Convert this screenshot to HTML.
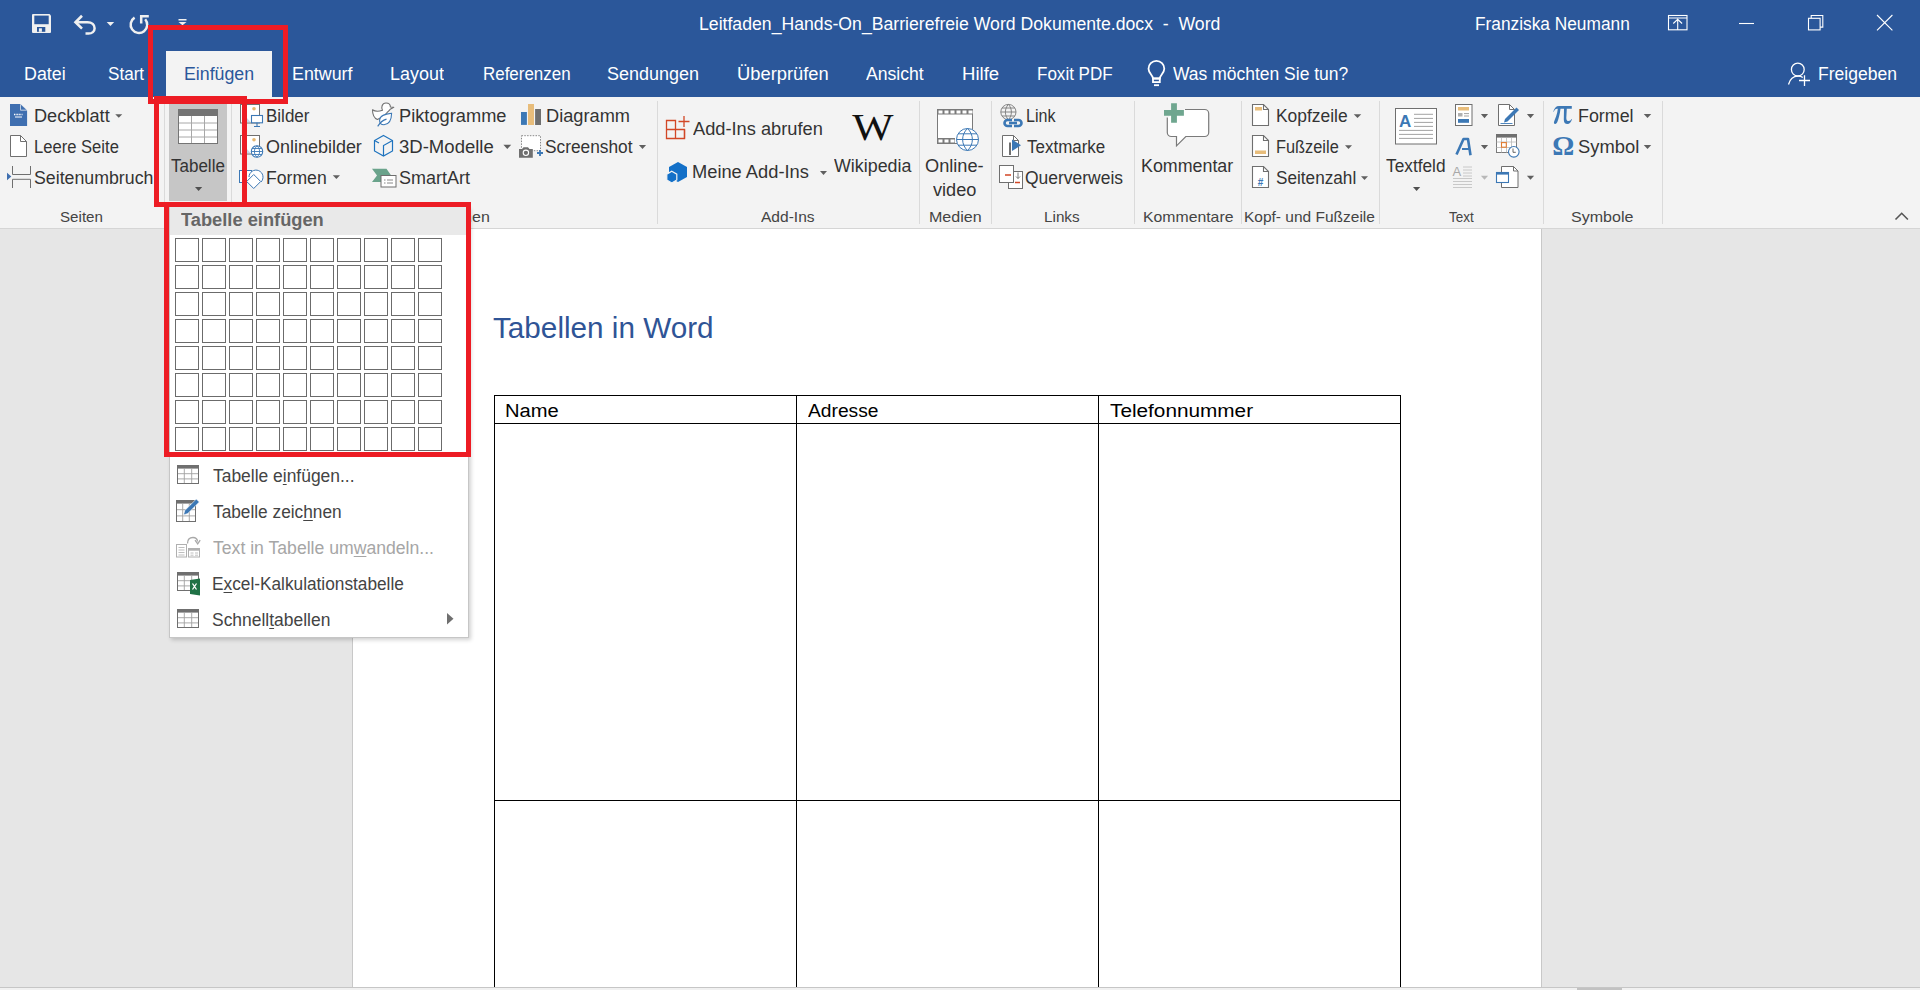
<!DOCTYPE html><html><head><meta charset="utf-8"><style>
html,body{margin:0;padding:0;width:1920px;height:990px;overflow:hidden;background:#e6e6e6;font-family:"Liberation Sans",sans-serif;}
.a{position:absolute;}
.t{position:absolute;white-space:nowrap;transform-origin:0 0;}
u{text-decoration:underline;text-underline-offset:2px;text-decoration-thickness:1px;}
</style></head><body>

<div class="a" style="left:0;top:0;width:1920px;height:97px;background:#2b579a"></div>
<div class="a" style="left:0;top:97px;width:1920px;height:131px;background:#f3f3f3"></div>
<div class="a" style="left:0;top:228px;width:1920px;height:1px;background:#d5d5d5"></div>
<div class="a" style="left:166px;top:51px;width:106px;height:46px;background:#f3f3f3"></div>
<div class="a" style="left:352px;top:229px;width:1px;height:758px;background:#c8c8c8"></div>
<div class="a" style="left:353px;top:229px;width:1188px;height:758px;background:#fff"></div>
<div class="a" style="left:1541px;top:229px;width:1px;height:758px;background:#c8c8c8"></div>
<div class="a" style="left:0;top:987px;width:1920px;height:1px;background:#c6c6c6"></div>
<div class="a" style="left:0;top:988px;width:1920px;height:2px;background:#f1f1f1"></div>
<div class="a" style="left:1577px;top:988px;width:45px;height:2px;background:#c2c2c2"></div>
<div class="a" style="left:494px;top:395px;width:907px;height:1px;background:#000"></div>
<div class="a" style="left:494px;top:423px;width:907px;height:1px;background:#000"></div>
<div class="a" style="left:494px;top:800px;width:907px;height:1px;background:#000"></div>
<div class="a" style="left:494px;top:395px;width:1px;height:592px;background:#000"></div>
<div class="a" style="left:796px;top:395px;width:1px;height:592px;background:#000"></div>
<div class="a" style="left:1098px;top:395px;width:1px;height:592px;background:#000"></div>
<div class="a" style="left:1400px;top:395px;width:1px;height:592px;background:#000"></div>
<div class="a" style="left:164px;top:101px;width:1px;height:123px;background:#dadada"></div>
<div class="a" style="left:231px;top:101px;width:1px;height:123px;background:#dadada"></div>
<div class="a" style="left:657px;top:101px;width:1px;height:123px;background:#dadada"></div>
<div class="a" style="left:919px;top:101px;width:1px;height:123px;background:#dadada"></div>
<div class="a" style="left:991px;top:101px;width:1px;height:123px;background:#dadada"></div>
<div class="a" style="left:1134px;top:101px;width:1px;height:123px;background:#dadada"></div>
<div class="a" style="left:1241px;top:101px;width:1px;height:123px;background:#dadada"></div>
<div class="a" style="left:1379px;top:101px;width:1px;height:123px;background:#dadada"></div>
<div class="a" style="left:1543px;top:101px;width:1px;height:123px;background:#dadada"></div>
<div class="a" style="left:1662px;top:101px;width:1px;height:123px;background:#dadada"></div>
<div class="a" style="left:169px;top:104px;width:58px;height:97px;background:#c6c6c6"></div>
<div class="t" style="left:698.53px;top:14.51px;font-size:18.3px;line-height:18.3px;color:#fff;transform:scaleX(0.9656);">Leitfaden_Hands-On_Barrierefreie Word Dokumente.docx  -  Word</div>
<div class="t" style="left:1474.55px;top:14.51px;font-size:18.3px;line-height:18.3px;color:#fff;transform:scaleX(0.9460);">Franziska Neumann</div>
<div class="t" style="left:23.52px;top:64.51px;font-size:18.3px;line-height:18.3px;color:#fff;transform:scaleX(0.9756);">Datei</div>
<div class="t" style="left:108.07px;top:64.51px;font-size:18.3px;line-height:18.3px;color:#fff;transform:scaleX(0.9342);">Start</div>
<div class="t" style="left:291.52px;top:64.51px;font-size:18.3px;line-height:18.3px;color:#fff;transform:scaleX(0.9754);">Entwurf</div>
<div class="t" style="left:390.02px;top:64.51px;font-size:18.3px;line-height:18.3px;color:#fff;transform:scaleX(0.9815);">Layout</div>
<div class="t" style="left:482.57px;top:64.51px;font-size:18.3px;line-height:18.3px;color:#fff;transform:scaleX(0.9266);">Referenzen</div>
<div class="t" style="left:607.02px;top:64.51px;font-size:18.3px;line-height:18.3px;color:#fff;transform:scaleX(0.9835);">Sendungen</div>
<div class="t" style="left:736.50px;top:64.51px;font-size:18.3px;line-height:18.3px;color:#fff;transform:scaleX(1.0028);">Überprüfen</div>
<div class="t" style="left:866.00px;top:64.51px;font-size:18.3px;line-height:18.3px;color:#fff;transform:scaleX(0.9625);">Ansicht</div>
<div class="t" style="left:962.49px;top:64.51px;font-size:18.3px;line-height:18.3px;color:#fff;transform:scaleX(1.0143);">Hilfe</div>
<div class="t" style="left:1037.07px;top:64.51px;font-size:18.3px;line-height:18.3px;color:#fff;transform:scaleX(0.9313);">Foxit PDF</div>
<div class="t" style="left:1172.50px;top:64.51px;font-size:18.3px;line-height:18.3px;color:#fff;transform:scaleX(0.9563);">Was möchten Sie tun?</div>
<div class="t" style="left:1817.79px;top:64.51px;font-size:18.3px;line-height:18.3px;color:#fff;transform:scaleX(0.9594);">Freigeben</div>
<div class="t" style="left:183.53px;top:64.51px;font-size:18.3px;line-height:18.3px;color:#2b579a;transform:scaleX(0.9714);">Einfügen</div>
<div class="t" style="left:33.51px;top:106.51px;font-size:18.3px;line-height:18.3px;color:#333333;transform:scaleX(0.9933);">Deckblatt</div>
<div class="t" style="left:33.59px;top:137.51px;font-size:18.3px;line-height:18.3px;color:#333333;transform:scaleX(0.9076);">Leere Seite</div>
<div class="t" style="left:33.53px;top:168.51px;font-size:18.3px;line-height:18.3px;color:#333333;transform:scaleX(0.9711);">Seitenumbruch</div>
<div class="t" style="left:171.00px;top:156.51px;font-size:18.3px;line-height:18.3px;color:#333333;transform:scaleX(0.9298);">Tabelle</div>
<div class="t" style="left:266.27px;top:106.51px;font-size:18.3px;line-height:18.3px;color:#333333;transform:scaleX(0.9304);">Bilder</div>
<div class="t" style="left:265.72px;top:137.51px;font-size:18.3px;line-height:18.3px;color:#333333;transform:scaleX(0.9825);">Onlinebilder</div>
<div class="t" style="left:266.24px;top:168.51px;font-size:18.3px;line-height:18.3px;color:#333333;transform:scaleX(0.9639);">Formen</div>
<div class="t" style="left:399.00px;top:106.51px;font-size:18.3px;line-height:18.3px;color:#333333;transform:scaleX(0.9981);">Piktogramme</div>
<div class="t" style="left:398.99px;top:137.51px;font-size:18.3px;line-height:18.3px;color:#333333;transform:scaleX(1.0141);">3D-Modelle</div>
<div class="t" style="left:399.02px;top:168.51px;font-size:18.3px;line-height:18.3px;color:#333333;transform:scaleX(0.9831);">SmartArt</div>
<div class="t" style="left:546.00px;top:106.51px;font-size:18.3px;line-height:18.3px;color:#333333;transform:scaleX(0.9970);">Diagramm</div>
<div class="t" style="left:545.05px;top:137.51px;font-size:18.3px;line-height:18.3px;color:#333333;transform:scaleX(0.9457);">Screenshot</div>
<div class="t" style="left:692.50px;top:119.51px;font-size:18.3px;line-height:18.3px;color:#333333;transform:scaleX(0.9981);">Add-Ins abrufen</div>
<div class="t" style="left:692.00px;top:163.26px;font-size:18.3px;line-height:18.3px;color:#333333;transform:scaleX(1.0000);">Meine Add-Ins</div>
<div class="t" style="left:834.25px;top:156.51px;font-size:18.3px;line-height:18.3px;color:#333333;transform:scaleX(0.9766);">Wikipedia</div>
<div class="t" style="left:925.41px;top:156.51px;font-size:18.3px;line-height:18.3px;color:#333333;transform:scaleX(0.9947);">Online-</div>
<div class="t" style="left:933.40px;top:180.51px;font-size:18.3px;line-height:18.3px;color:#333333;transform:scaleX(0.9930);">video</div>
<div class="t" style="left:1026.12px;top:106.51px;font-size:18.3px;line-height:18.3px;color:#333333;transform:scaleX(0.8788);">Link</div>
<div class="t" style="left:1027.00px;top:137.51px;font-size:18.3px;line-height:18.3px;color:#333333;transform:scaleX(0.9286);">Textmarke</div>
<div class="t" style="left:1025.04px;top:168.51px;font-size:18.3px;line-height:18.3px;color:#333333;transform:scaleX(0.9554);">Querverweis</div>
<div class="t" style="left:1141.02px;top:156.51px;font-size:18.3px;line-height:18.3px;color:#333333;transform:scaleX(0.9761);">Kommentar</div>
<div class="t" style="left:1276.05px;top:106.51px;font-size:18.3px;line-height:18.3px;color:#333333;transform:scaleX(0.9527);">Kopfzeile</div>
<div class="t" style="left:1276.11px;top:137.51px;font-size:18.3px;line-height:18.3px;color:#333333;transform:scaleX(0.8949);">Fußzeile</div>
<div class="t" style="left:1276.06px;top:168.51px;font-size:18.3px;line-height:18.3px;color:#333333;transform:scaleX(0.9398);">Seitenzahl</div>
<div class="t" style="left:1386.20px;top:156.51px;font-size:18.3px;line-height:18.3px;color:#333333;transform:scaleX(0.9452);">Textfeld</div>
<div class="t" style="left:1577.77px;top:106.51px;font-size:18.3px;line-height:18.3px;color:#333333;transform:scaleX(0.9773);">Formel</div>
<div class="t" style="left:1577.75px;top:137.51px;font-size:18.3px;line-height:18.3px;color:#333333;transform:scaleX(1.0042);">Symbol</div>
<div class="t" style="left:59.96px;top:209.64px;font-size:14.6px;line-height:14.6px;color:#444444;transform:scaleX(1.0375);">Seiten</div>
<div class="t" style="left:399.40px;top:209.64px;font-size:14.6px;line-height:14.6px;color:#444444;transform:scaleX(1.0975);">Illustrationen</div>
<div class="t" style="left:761.00px;top:209.64px;font-size:14.6px;line-height:14.6px;color:#444444;transform:scaleX(1.0650);">Add-Ins</div>
<div class="t" style="left:928.60px;top:209.64px;font-size:14.6px;line-height:14.6px;color:#444444;transform:scaleX(1.1000);">Medien</div>
<div class="t" style="left:1044.45px;top:209.64px;font-size:14.6px;line-height:14.6px;color:#444444;transform:scaleX(1.0455);">Links</div>
<div class="t" style="left:1142.67px;top:209.64px;font-size:14.6px;line-height:14.6px;color:#444444;transform:scaleX(1.0823);">Kommentare</div>
<div class="t" style="left:1244.44px;top:209.64px;font-size:14.6px;line-height:14.6px;color:#444444;transform:scaleX(1.0615);">Kopf- und Fußzeile</div>
<div class="t" style="left:1448.75px;top:209.64px;font-size:14.6px;line-height:14.6px;color:#444444;transform:scaleX(0.9259);">Text</div>
<div class="t" style="left:1571.40px;top:209.64px;font-size:14.6px;line-height:14.6px;color:#444444;transform:scaleX(1.1000);">Symbole</div>
<div class="t" style="left:493.18px;top:313.55px;font-size:29px;line-height:29px;color:#2f5496;transform:scaleX(1.0239);">Tabellen in Word</div>
<div class="t" style="left:504.88px;top:401.76px;font-size:18px;line-height:18px;color:#000;transform:scaleX(1.1196);">Name</div>
<div class="t" style="left:807.80px;top:401.76px;font-size:18px;line-height:18px;color:#000;transform:scaleX(1.0677);">Adresse</div>
<div class="t" style="left:1109.70px;top:401.76px;font-size:18px;line-height:18px;color:#000;transform:scaleX(1.1532);">Telefonnummer</div>
<svg class="a" style="left:0;top:0" width="1920" height="990" viewBox="0 0 1920 990"><path d="M32 15a1 1 0 0 1 1-1h16.5l1.5 1.5V32a1 1 0 0 1-1 1H33a1 1 0 0 1-1-1z" fill="#f0f0f0"/><rect x="34.3" y="15.6" width="14.4" height="8.6" fill="#2b579a"/><rect x="37" y="27" width="8.3" height="4.8" fill="#2b579a"/><rect x="38.9" y="28.3" width="3" height="3.5" fill="#f0f0f0"/><path d="M76 22.2H87.5C92 22.2 94.6 25 94.6 28.2C94.6 31.5 92 33.6 88.5 33.6H85.5" fill="none" stroke="#f0f0f0" stroke-width="2.5"/><path d="M82 15.8L75.5 22.2L82 28.6" fill="none" stroke="#f0f0f0" stroke-width="2.6"/><path d="M106.7 22h7.5l-3.75 4z" fill="#f0f0f0"/><path d="M134.6 17.6A8.3 8.3 0 1 0 145.2 19.2" fill="none" stroke="#f0f0f0" stroke-width="2.5"/><path d="M141.2 23.5V16.3H148.8" fill="none" stroke="#f0f0f0" stroke-width="2.5"/><rect x="178.5" y="19" width="8" height="1.5" fill="#f0f0f0"/><path d="M178.5 22h8l-4 3.3z" fill="#f0f0f0"/><g fill="none" stroke="#fff" stroke-width="1.1"><rect x="1668.5" y="15.5" width="18.5" height="14.3"/><path d="M1668.5 18h18.5M1677.7 30V19.5M1673.3 23.5l4.4-4.2 4.4 4.2"/><path d="M1739 23.5h15"/><rect x="1808.5" y="18.3" width="11.6" height="11.6"/><path d="M1811.2 18.3v-2.8h11.6v11.6h-2.7"/><path d="M1877 15l15.4 15.4M1892.4 15l-15.4 15.4"/></g><g fill="none" stroke="#fff" stroke-width="1.8"><path d="M1153 78.5c0-3-4.5-5.5-4.5-9.8a7.9 7.9 0 0 1 15.8 0c0 4.3-4.5 6.8-4.5 9.8z"/><rect x="1153" y="78.5" width="6.8" height="3.6"/></g><rect x="1154" y="84.3" width="5" height="1.8" fill="#fff"/><g fill="none" stroke="#fff" stroke-width="1.3"><circle cx="1797.8" cy="69.6" r="6.4"/><path d="M1788.5 84.5c1.5-5.5 5.5-8.3 9.5-8.3 2 0 3.5.4 4.8 1.3"/><path d="M1799 80.5h11M1804.5 75.2v10.8"/></g><path d="M10 104h10.3l6.8 6.5V126H10z" fill="#3f6fb0"/><path d="M20.3 104v6.5h6.8z" fill="#f3f3f3"/><path d="M21 104.8v5h5.3z" fill="#3f6fb0"/><path d="M14 114.5h8.5" stroke="#fff" stroke-width="1.3" stroke-dasharray="1 .6"/><path d="M15 117h7" stroke="#fff" stroke-width="1"/><path d="M10.5 135.5h10l6 6V156.5h-16z" fill="#fff" stroke="#6f6f6f" stroke-width="1"/><path d="M20.5 135.5v6h6" fill="none" stroke="#6f6f6f" stroke-width="1"/><g fill="none" stroke="#6f6f6f" stroke-width="1"><path d="M12.5 166v8.5h18V166M12.5 188v-8.7h18V188"/></g><path d="M7 172.7l4.3 3.8-4.3 3.8z" fill="#3f6fb0"/><path d="M115.25 114.2h7l-3.5 3.6z" fill="#5f5f5f"/><rect x="178.5" y="109.5" width="39" height="34" fill="#fff" stroke="#747474" stroke-width="1"/><rect x="178.5" y="109.5" width="39" height="6.5" fill="#747474"/><g stroke="#a8a8a8" stroke-width="1"><path d="M191.5 116v27M204.5 116v27M179 123h38M179 130h38M179 137h38"/></g><rect x="178.5" y="109.5" width="39" height="34" fill="none" stroke="#747474" stroke-width="1"/><path d="M195.0 187.1h7.2l-3.6 3.9z" fill="#505050"/><rect x="240.5" y="104.5" width="19" height="18.5" fill="#fff" stroke="#6f6f6f"/><circle cx="254" cy="108.8" r="1.8" fill="#e6b770"/><path d="M242 112.5l8.5 9.5h-8.5z" fill="#c5d9ee"/><rect x="251.5" y="115.5" width="11" height="7.3" fill="#fff" stroke="#3c78b5" stroke-width="1.1"/><path d="M257 122.8v3.2M254 126.5h6" stroke="#3c78b5" stroke-width="1.1"/><rect x="240.5" y="135.5" width="19" height="18.5" fill="#fff" stroke="#6f6f6f"/><circle cx="254" cy="139.8" r="1.8" fill="#e6b770"/><path d="M242 143.5l8.5 9.5h-8.5z" fill="#c5d9ee"/><circle cx="257" cy="151.5" r="5.7" fill="#fff" stroke="#3c78b5" stroke-width="1.1"/><path d="M251.3 151.5h11.4M252.3 148.5h9.4M252.3 154.5h9.4M257 145.8c-3.5 3.5-3.5 8 0 11.4M257 145.8c3.5 3.5 3.5 8 0 11.4" fill="none" stroke="#3c78b5" stroke-width="0.9"/><g fill="#fff" stroke="#3c78b5" stroke-width="1"><rect x="239.5" y="170.5" width="12" height="12"/><path d="M249 177a7 7 0 1 1 12 5" /><path d="M253.7 174.5l7 7-7 7-7-7z"/></g><path d="M332.79999999999995 175.3h7.2l-3.6 3.8z" fill="#5f5f5f"/><path d="M372.5 109.7C375 111.5 379 111.5 382.5 110.2C381 108 381.8 103 386 103C389.3 103 390.4 105.3 390.4 107L393.8 107.3L390.2 109.3C389.5 110.8 387.8 111.5 386.8 112.8L384 116L377.4 119.4C374 118 372.5 115 372.5 109.7Z" fill="#fff" stroke="#707070" stroke-width="1.1" stroke-linejoin="round"/><path d="M391.6 113.3C386 114 380 115 379.6 120C379.4 123 381 124.8 384 124.8C389.5 124.5 391.5 119 391.6 113.3Z" fill="#fff" stroke="#3c78b5" stroke-width="1.1"/><path d="M377.7 126.4C380 122.5 383 120 386.5 119.1" fill="none" stroke="#3c78b5" stroke-width="1.1"/><g fill="none" stroke="#1e73be" stroke-width="1.2"><path d="M383.5 135.5l9 5v10.5l-9 5-9-5V140.5z"/><path d="M374.5 140.5l4.5 2.5M392.5 140.5l-9 5v10.5"/></g><path d="M503.40000000000003 144.7h7.8l-3.9 4.2z" fill="#5f5f5f"/><path d="M372 168.8H386.5L391 175.3L386.5 182H372L377 175.4Z" fill="#6aa38b"/><rect x="381" y="175.5" width="15" height="11.5" fill="#fff" stroke="#6f6f6f"/><path d="M384 180h1.5M387 180h6M384 183h1.5M387 183h6" stroke="#7a7a7a" stroke-width="0.9"/><rect x="521" y="112" width="5.9" height="12.9" fill="#3c78b5"/><rect x="528" y="104" width="6" height="21" fill="#e8bd7b"/><rect x="535.1" y="109" width="5.9" height="16" fill="#6f6f6f"/><rect x="521.5" y="135.7" width="19" height="15" fill="#fff" stroke="#888" stroke-width="1" stroke-dasharray="1.5 1.3"/><path d="M519 149h3l1.5-1.8h4.5l1.5 1.8h3.3v8.7H519z" fill="#6f6f6f"/><circle cx="525.9" cy="152.8" r="2.7" fill="none" stroke="#fff" stroke-width="1.1"/><path d="M537 153h6M540 150v6" stroke="#3c78b5" stroke-width="1.8"/><path d="M638.9 145.1h7.2l-3.6 3.8z" fill="#5f5f5f"/><g fill="none" stroke="#d24726" stroke-width="1.3"><path d="M666.5 120.5h9v18h-9zM666.5 129.5h18v9h-9"/><path d="M684.5 129.5v9M678.5 121.5h11M684 116v11"/></g><path d="M678 162l9 5v10l-9 5-9-5v-10z" fill="#1370c8"/><path d="M671.8 171.3l5 2.9v5.8l-5 2.9-5-2.9v-5.8z" fill="#1370c8" stroke="#f3f3f3" stroke-width="1.2"/><path d="M820.0 171h7l-3.5 4z" fill="#5f5f5f"/><text x="873" y="140" font-family="Liberation Serif" font-size="38" text-anchor="middle" fill="#111" transform="translate(873 0) scale(1.15 1) translate(-873 0)">W</text><rect x="937.5" y="109.5" width="35" height="34" fill="#fff" stroke="#7a7a7a" stroke-width="1"/><g fill="#7a7a7a"><rect x="937" y="109" width="36" height="5.5"/><rect x="937" y="138" width="18" height="5.5"/></g><g fill="#fff"><rect x="938.5" y="110.5" width="4" height="3"/><rect x="944.5" y="110.5" width="4" height="3"/><rect x="950.5" y="110.5" width="4" height="3"/><rect x="956.5" y="110.5" width="4" height="3"/><rect x="962.5" y="110.5" width="4" height="3"/><rect x="968.5" y="110.5" width="4" height="3"/><rect x="938.5" y="139.5" width="4" height="3"/><rect x="944.5" y="139.5" width="4" height="3"/><rect x="950.5" y="139.5" width="4" height="3"/></g><circle cx="967.5" cy="139.5" r="11" fill="#fff" stroke="#3c78b5" stroke-width="1"/><path d="M956.5 139.5h22M958 133.8h19M958 145.2h19M967.5 128.5c-6.5 6-6.5 16 0 22M967.5 128.5c6.5 6 6.5 16 0 22" fill="none" stroke="#3c78b5" stroke-width="1"/><g fill="none" stroke="#7a7a7a" stroke-width="0.9"><circle cx="1008.4" cy="112" r="7.6"/><path d="M1000.8 112h15.2M1002 108h12.8M1002 116h12.8M1008.4 104.4c-4 4-4 11.5 0 15.2M1008.4 104.4c4 4 4 11.5 0 15.2"/></g><g fill="none" stroke="#3c78b5" stroke-width="2.6"><path d="M1012 120h-4.5a3 3 0 0 0 0 6h4.5M1014 120h4.5a3 3 0 0 1 0 6H1014M1009 123h8"/></g><path d="M1002.5 135.5h11l5 5v16h-16z" fill="#fff" stroke="#6f6f6f"/><path d="M1013.5 135.5v5h5" fill="none" stroke="#6f6f6f"/><rect x="1009" y="142.5" width="2" height="12.5" fill="#6f6f6f"/><path d="M1012 139.5l9 5.8-9 5.8z" fill="#3c78b5"/><rect x="1008.5" y="171.5" width="14" height="17" fill="#fff" stroke="#6f6f6f"/><rect x="999.5" y="165.5" width="14" height="17" fill="#fff" stroke="#6f6f6f"/><path d="M1005 175h6M1015 182.5h5" stroke="#d24726" stroke-width="1.6"/><path d="M1018 172.5v6M1016 176.5l2 2 2-2" fill="none" stroke="#6f6f6f" stroke-width="0.9"/><path d="M1185 109.5H1204.7A4 4 0 0 1 1208.7 113.5V132.5A4 4 0 0 1 1204.7 136.5H1185.8L1176.5 145.8V136.5H1171.3A4 4 0 0 1 1167.3 132.5V117.5" fill="#fff" stroke="#7a7a7a" stroke-width="1.2"/><path d="M1171.1 103.2h5.8v6.9h7v5.6h-7v7.1h-5.8v-7.1h-7.1v-5.6h7.1z" fill="#6fa68f"/><path d="M1252.5 104.5h11l5 5v16h-16z" fill="#fff" stroke="#6f6f6f" stroke-width="1.1"/><path d="M1263.5 104.5v5h5" fill="none" stroke="#6f6f6f" stroke-width="1.1"/><rect x="1255" y="107" width="7" height="3.5" fill="#e8bd7b"/><path d="M1252.5 135.5h11l5 5v16h-16z" fill="#fff" stroke="#6f6f6f" stroke-width="1.1"/><path d="M1263.5 135.5v5h5" fill="none" stroke="#6f6f6f" stroke-width="1.1"/><rect x="1255" y="150.5" width="11" height="3.5" fill="#e8bd7b"/><path d="M1252.5 166.5h11l5 5v16h-16z" fill="#fff" stroke="#6f6f6f" stroke-width="1.1"/><path d="M1263.5 166.5v5h5" fill="none" stroke="#6f6f6f" stroke-width="1.1"/><text x="1260.5" y="186" font-family="Liberation Sans" font-size="10" font-weight="bold" text-anchor="middle" fill="#3c78b5">#</text><path d="M1353.75 114.2h7.5l-3.75 3.8z" fill="#5f5f5f"/><path d="M1345.0 145.2h7l-3.5 3.8z" fill="#5f5f5f"/><path d="M1361.0 176.2h7l-3.5 3.8z" fill="#5f5f5f"/><rect x="1395.5" y="108.5" width="41" height="35.5" fill="#fff" stroke="#6f6f6f" stroke-width="1"/><text x="1399" y="127" font-family="Liberation Sans" font-size="17" font-weight="bold" fill="#3c78b5">A</text><path d="M1414 114.3h19M1414 118.4h19M1414 122.4h19M1414 126.4h19M1399 130.4h34M1399 134.4h34M1399 138.4h34" stroke="#8a8a8a" stroke-width="0.8"/><path d="M1413.0 187h7.2l-3.6 3.9z" fill="#505050"/><rect x="1455.5" y="104.5" width="16.5" height="21" fill="#fff" stroke="#6f6f6f"/><rect x="1458" y="107" width="11" height="3.5" fill="#e8bd7b"/><rect x="1458" y="113" width="4.5" height="3.5" fill="#b0b0b0"/><path d="M1464 113.6h5M1464 116h5" stroke="#8a8a8a" stroke-width="0.8"/><rect x="1458" y="119" width="11" height="3.8" fill="#3c78b5"/><path d="M1480.9 114h7.2l-3.6 4.2z" fill="#5f5f5f"/><path d="M1498.5 104.5h11l5 5v16h-16z" fill="#fff" stroke="#6f6f6f"/><path d="M1509.5 104.5v5h5" fill="none" stroke="#6f6f6f"/><path d="M1504 122.5l1-3.5 11.5-11.5 2.5 2.5-11.5 11.5z" fill="#3c78b5"/><path d="M1500.5 123.5h12" stroke="#3c78b5" stroke-width="0.9"/><path d="M1526.9 114h7.2l-3.6 4.2z" fill="#5f5f5f"/><path d="M1456.5 154.5l7-15.5h4.5l2.5 16.3" fill="none" stroke="#3c78b5" stroke-width="2.6" stroke-linejoin="round"/><path d="M1462 149h7" stroke="#3c78b5" stroke-width="2"/><path d="M1480.9 145h7.2l-3.6 4.2z" fill="#5f5f5f"/><rect x="1496.5" y="134.5" width="20" height="18" fill="#fff" stroke="#7a7a7a"/><rect x="1496" y="134" width="21" height="3.6" fill="#6f6f6f"/><path d="M1501.5 138v14.5M1506.5 138v14.5M1511.5 138v14.5M1496.5 142h20M1496.5 147.5h20" stroke="#b8b8b8" stroke-width="0.8"/><rect x="1501.5" y="142.6" width="4.8" height="4.6" fill="#fff" stroke="#e07b2f" stroke-width="1.1"/><circle cx="1513.8" cy="151.8" r="5.3" fill="#fff" stroke="#3c78b5" stroke-width="1.1"/><path d="M1513 148.5v3.8h2.8" fill="none" stroke="#555" stroke-width="0.9"/><text x="1452.5" y="175.6" font-family="Liberation Sans" font-size="13" fill="#a8a8a8">A</text><path d="M1463 167h9M1463 170h9M1463 173h9M1463 176h9M1453 178.5h19M1453 181.5h19M1453 184.5h19M1453 187.5h19" stroke="#bdbdbd" stroke-width="0.8"/><path d="M1480.9 175.8h7.2l-3.6 4z" fill="#b8b8b8"/><path d="M1501.5 166.5h12l4.5 4.5v16.5h-16.5z" fill="#fff" stroke="#6f6f6f"/><path d="M1513.5 166.5v4.5h4.5" fill="none" stroke="#6f6f6f"/><rect x="1496.5" y="172.5" width="12" height="10" fill="#fff" stroke="#3c78b5" stroke-width="1.1"/><rect x="1496" y="172" width="13" height="2.6" fill="#3c78b5"/><path d="M1526.9 175.8h7.2l-3.6 4z" fill="#5f5f5f"/><path d="M1553.3 111.5C1554.5 108 1556 106 1559 106L1571.8 106L1571.8 108.8L1566.8 108.8L1566.3 118C1566.3 120.5 1567.5 121 1568.5 121C1570 121 1571 120 1571.5 119L1572 119.3C1571 122.5 1569.5 124 1567.5 124C1565 124 1563.8 122.5 1563.8 119.5L1564 108.8L1560.5 108.8C1560 114 1558.5 119 1557.5 121.5C1557 123 1556.2 124 1555.2 124C1554 124 1553.8 123 1554 122C1555 119 1557.5 114 1557.8 108.8L1557 108.8C1555.5 108.8 1554.5 110 1553.8 111.7Z" fill="#3c78b5"/><text x="1552.3" y="155" font-family="Liberation Serif" font-size="27.5" font-weight="bold" fill="#3c78b5">Ω</text><path d="M1643.75 114h7.5l-3.75 4z" fill="#5f5f5f"/><path d="M1643.75 145h7.5l-3.75 4z" fill="#5f5f5f"/><path d="M1895.5 219.5l6.2-6.2 6.2 6.2" fill="none" stroke="#555" stroke-width="1.6"/></svg>
<div class="a" style="left:169px;top:207px;width:300px;height:431px;background:#fff;border:1px solid #c6c6c6;box-sizing:border-box;box-shadow:2px 2px 4px rgba(0,0,0,0.18)"></div>
<div class="a" style="left:170px;top:207px;width:298px;height:28px;background:#e9e9e9"></div>
<div class="t" style="left:180.50px;top:210.51px;font-size:18.3px;line-height:18.3px;color:#666666;font-weight:bold;transform:scaleX(0.9993);">Tabelle einfügen</div>
<svg class="a" style="left:0;top:0" width="1920" height="990" viewBox="0 0 1920 990"><g fill="#fff" stroke="#6b6b6b" stroke-width="1"><rect x="175.5" y="238.5" width="23" height="23"/><rect x="202.5" y="238.5" width="23" height="23"/><rect x="229.5" y="238.5" width="23" height="23"/><rect x="256.5" y="238.5" width="23" height="23"/><rect x="283.5" y="238.5" width="23" height="23"/><rect x="310.5" y="238.5" width="23" height="23"/><rect x="337.5" y="238.5" width="23" height="23"/><rect x="364.5" y="238.5" width="23" height="23"/><rect x="391.5" y="238.5" width="23" height="23"/><rect x="418.5" y="238.5" width="23" height="23"/><rect x="175.5" y="265.5" width="23" height="23"/><rect x="202.5" y="265.5" width="23" height="23"/><rect x="229.5" y="265.5" width="23" height="23"/><rect x="256.5" y="265.5" width="23" height="23"/><rect x="283.5" y="265.5" width="23" height="23"/><rect x="310.5" y="265.5" width="23" height="23"/><rect x="337.5" y="265.5" width="23" height="23"/><rect x="364.5" y="265.5" width="23" height="23"/><rect x="391.5" y="265.5" width="23" height="23"/><rect x="418.5" y="265.5" width="23" height="23"/><rect x="175.5" y="292.5" width="23" height="23"/><rect x="202.5" y="292.5" width="23" height="23"/><rect x="229.5" y="292.5" width="23" height="23"/><rect x="256.5" y="292.5" width="23" height="23"/><rect x="283.5" y="292.5" width="23" height="23"/><rect x="310.5" y="292.5" width="23" height="23"/><rect x="337.5" y="292.5" width="23" height="23"/><rect x="364.5" y="292.5" width="23" height="23"/><rect x="391.5" y="292.5" width="23" height="23"/><rect x="418.5" y="292.5" width="23" height="23"/><rect x="175.5" y="319.5" width="23" height="23"/><rect x="202.5" y="319.5" width="23" height="23"/><rect x="229.5" y="319.5" width="23" height="23"/><rect x="256.5" y="319.5" width="23" height="23"/><rect x="283.5" y="319.5" width="23" height="23"/><rect x="310.5" y="319.5" width="23" height="23"/><rect x="337.5" y="319.5" width="23" height="23"/><rect x="364.5" y="319.5" width="23" height="23"/><rect x="391.5" y="319.5" width="23" height="23"/><rect x="418.5" y="319.5" width="23" height="23"/><rect x="175.5" y="346.5" width="23" height="23"/><rect x="202.5" y="346.5" width="23" height="23"/><rect x="229.5" y="346.5" width="23" height="23"/><rect x="256.5" y="346.5" width="23" height="23"/><rect x="283.5" y="346.5" width="23" height="23"/><rect x="310.5" y="346.5" width="23" height="23"/><rect x="337.5" y="346.5" width="23" height="23"/><rect x="364.5" y="346.5" width="23" height="23"/><rect x="391.5" y="346.5" width="23" height="23"/><rect x="418.5" y="346.5" width="23" height="23"/><rect x="175.5" y="373.5" width="23" height="23"/><rect x="202.5" y="373.5" width="23" height="23"/><rect x="229.5" y="373.5" width="23" height="23"/><rect x="256.5" y="373.5" width="23" height="23"/><rect x="283.5" y="373.5" width="23" height="23"/><rect x="310.5" y="373.5" width="23" height="23"/><rect x="337.5" y="373.5" width="23" height="23"/><rect x="364.5" y="373.5" width="23" height="23"/><rect x="391.5" y="373.5" width="23" height="23"/><rect x="418.5" y="373.5" width="23" height="23"/><rect x="175.5" y="400.5" width="23" height="23"/><rect x="202.5" y="400.5" width="23" height="23"/><rect x="229.5" y="400.5" width="23" height="23"/><rect x="256.5" y="400.5" width="23" height="23"/><rect x="283.5" y="400.5" width="23" height="23"/><rect x="310.5" y="400.5" width="23" height="23"/><rect x="337.5" y="400.5" width="23" height="23"/><rect x="364.5" y="400.5" width="23" height="23"/><rect x="391.5" y="400.5" width="23" height="23"/><rect x="418.5" y="400.5" width="23" height="23"/><rect x="175.5" y="427.5" width="23" height="23"/><rect x="202.5" y="427.5" width="23" height="23"/><rect x="229.5" y="427.5" width="23" height="23"/><rect x="256.5" y="427.5" width="23" height="23"/><rect x="283.5" y="427.5" width="23" height="23"/><rect x="310.5" y="427.5" width="23" height="23"/><rect x="337.5" y="427.5" width="23" height="23"/><rect x="364.5" y="427.5" width="23" height="23"/><rect x="391.5" y="427.5" width="23" height="23"/><rect x="418.5" y="427.5" width="23" height="23"/></g><rect x="177.5" y="465.5" width="21" height="18" fill="#fff" stroke="#6f6f6f"/><rect x="177" y="465" width="22" height="3.6" fill="#6f6f6f"/><path d="M184.3 468.6V484M191.7 468.6V484M177 473.7H199M177 478.9H199" stroke="#a0a0a0" stroke-width="0.9"/><rect x="177.5" y="465.5" width="21" height="18" fill="none" stroke="#6f6f6f"/><rect x="176.5" y="500.5" width="19" height="21" fill="#fff" stroke="#6f6f6f"/><rect x="176" y="500" width="20" height="3.6" fill="#6f6f6f"/><path d="M182.7 503.6V522M189.3 503.6V522M176 509.7H196M176 515.9H196" stroke="#a0a0a0" stroke-width="0.9"/><rect x="176.5" y="500.5" width="19" height="21" fill="none" stroke="#6f6f6f"/><path d="M183.5 515l1.3-4.5 11.5-11.5 3 3-11.5 11.5z" fill="#3c78b5" stroke="#fff" stroke-width="0.6"/><g fill="#fff" stroke="#b0b0b0" stroke-width="1"><rect x="176.5" y="544.5" width="10" height="12.5"/><rect x="188.5" y="548.5" width="11" height="8.5"/></g><rect x="188.5" y="548.5" width="11" height="2.2" fill="#b0b0b0"/><path d="M178.5 547.5h6M178.5 550h6M178.5 552.5h6M178.5 555h6M190.5 553h3M195 553h3M190.5 555.2h3M195 555.2h3" fill="none" stroke="#b8b8b8" stroke-width="0.9"/><path d="M187.5 543.5C187.5 539.5 190 537.5 193 537.5C195.5 537.5 197.3 539.2 197.6 541.5" fill="none" stroke="#a8a8a8" stroke-width="1.3"/><path d="M195 540.2L197.7 543.8L200.2 540.2" fill="none" stroke="#a8a8a8" stroke-width="1.3"/><rect x="177.5" y="572.5" width="21" height="18" fill="#fff" stroke="#6f6f6f"/><rect x="177" y="572" width="22" height="3.6" fill="#6f6f6f"/><path d="M184.3 575.6V591M191.7 575.6V591M177 580.7H199M177 585.9H199" stroke="#a0a0a0" stroke-width="0.9"/><rect x="177.5" y="572.5" width="21" height="18" fill="none" stroke="#6f6f6f"/><path d="M190 580l10 -1.5v17l-10-1.5z" fill="#1f7145"/><path d="M192.5 583.5l4 6M196.5 583.5l-4 6" stroke="#fff" stroke-width="1.3"/><rect x="177.5" y="609.5" width="21" height="18" fill="#fff" stroke="#6f6f6f"/><rect x="177" y="609" width="22" height="3.6" fill="#6f6f6f"/><path d="M184.3 612.6V628M191.7 612.6V628M177 617.7H199M177 622.9H199" stroke="#a0a0a0" stroke-width="0.9"/><rect x="177.5" y="609.5" width="21" height="18" fill="none" stroke="#6f6f6f"/><path d="M447 613l6.5 5.7-6.5 5.7z" fill="#6f6f6f"/></svg>
<div class="t" style="left:213.00px;top:466.71px;font-size:18.3px;line-height:18.3px;color:#444444;transform:scaleX(0.9537);">Tabelle e<u>i</u>nfügen...</div>
<div class="t" style="left:213.00px;top:502.81px;font-size:18.3px;line-height:18.3px;color:#444444;transform:scaleX(0.9444);">Tabelle zeic<u>h</u>nen</div>
<div class="t" style="left:213.00px;top:538.51px;font-size:18.3px;line-height:18.3px;color:#a6a6a6;transform:scaleX(0.9636);">Text in Tabelle um<u>w</u>andeln...</div>
<div class="t" style="left:212.06px;top:574.51px;font-size:18.3px;line-height:18.3px;color:#444444;transform:scaleX(0.9441);">E<u>x</u>cel-Kalkulationstabelle</div>
<div class="t" style="left:212.05px;top:610.51px;font-size:18.3px;line-height:18.3px;color:#444444;transform:scaleX(0.9541);">Schnell<u>t</u>abellen</div>
<svg class="a" style="left:0;top:0" width="1920" height="990" viewBox="0 0 1920 990"><rect x="148" y="25" width="140" height="5" fill="#ed1c24"/><rect x="148" y="99" width="140" height="5" fill="#ed1c24"/><rect x="148" y="25" width="5" height="79" fill="#ed1c24"/><rect x="283" y="25" width="5" height="79" fill="#ed1c24"/><rect x="154" y="96" width="93" height="5" fill="#ed1c24"/><rect x="154" y="202" width="93" height="5" fill="#ed1c24"/><rect x="154" y="96" width="5" height="111" fill="#ed1c24"/><rect x="242" y="96" width="5" height="111" fill="#ed1c24"/><rect x="164" y="202" width="307" height="5" fill="#ed1c24"/><rect x="164" y="452" width="307" height="5" fill="#ed1c24"/><rect x="164" y="202" width="5" height="255" fill="#ed1c24"/><rect x="466" y="202" width="5" height="255" fill="#ed1c24"/></svg>
</body></html>
